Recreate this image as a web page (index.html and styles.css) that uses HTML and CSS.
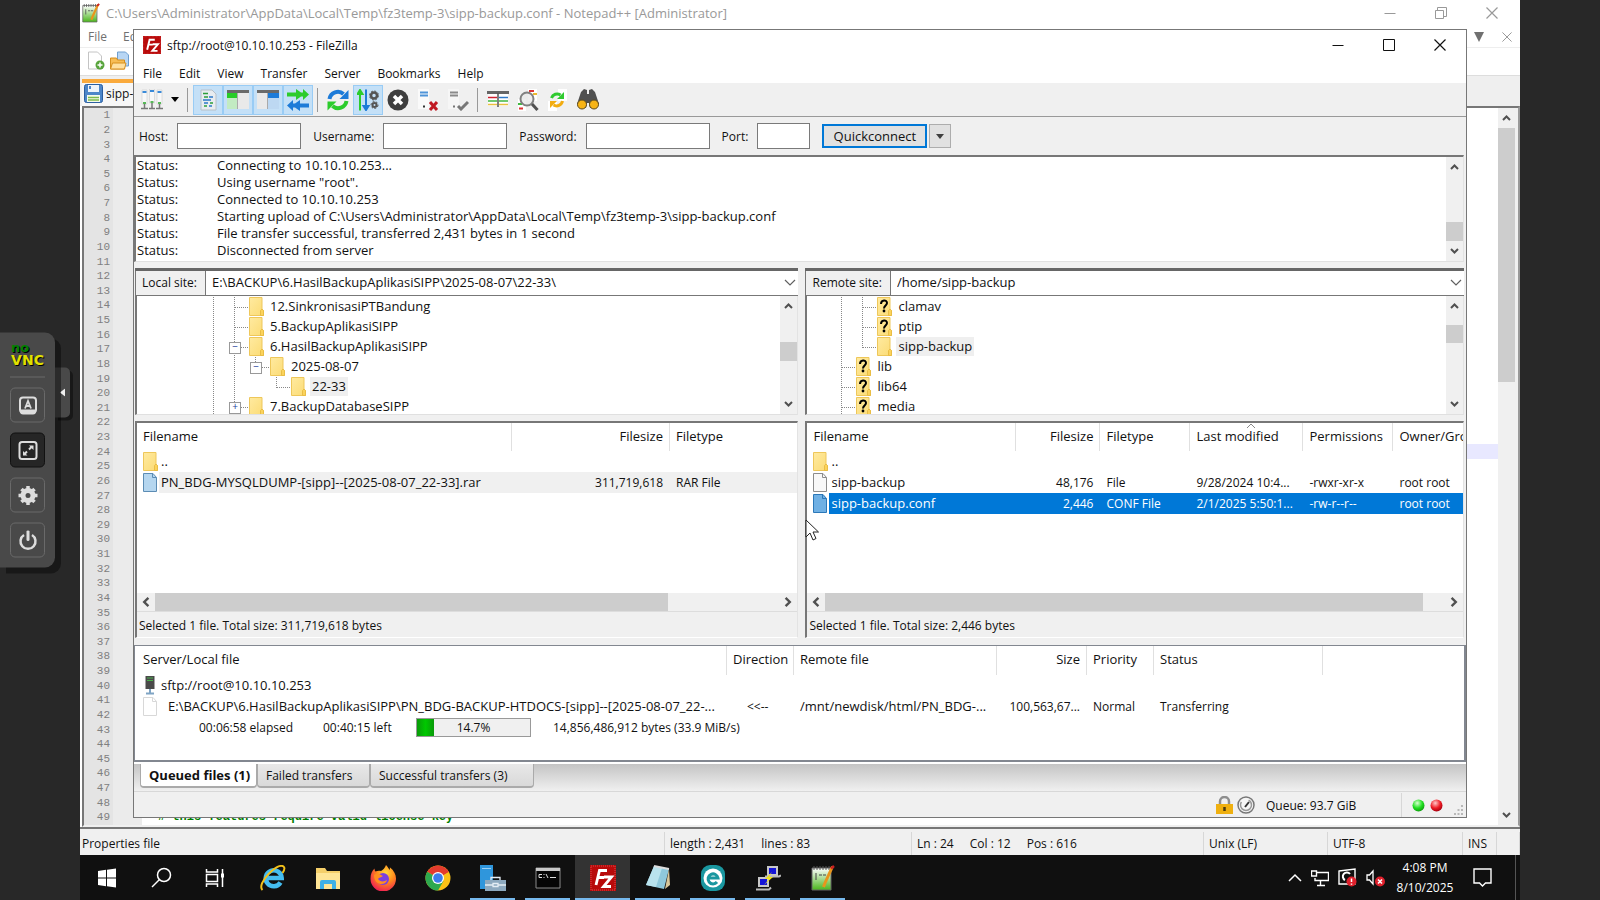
FILE: index.html
```html
<!DOCTYPE html>
<html lang="en">

<head>
	<meta charset="utf-8">
	<meta name="viewport" content="width=device-width, initial-scale=1.0">
	<title>noVNC</title>
	<link rel="stylesheet" href="styles.css">
</head>

<body>
	<!-- shared icons -->
	<svg class="defs" aria-hidden="true">
		<defs>
			<linearGradient id="g-folder" x1="0" y1="0" x2="1" y2="1">
				<stop offset="0" stop-color="#ffeaa0" />
				<stop offset="1" stop-color="#fbdb74" />
			</linearGradient>
			<linearGradient id="g-green" x1="0" y1="0" x2="0" y2="1">
				<stop offset="0" stop-color="#fff" />
				<stop offset="1" stop-color="#4ab51c" />
			</linearGradient>
			<radialGradient id="g-fox" cx="0.6" cy="0.3" r="0.7">
				<stop offset="0" stop-color="#ffd83a" />
				<stop offset="0.5" stop-color="#ff8a1c" />
				<stop offset="1" stop-color="#f0264f" />
			</radialGradient>
			<radialGradient id="g-led1" cx="0.4" cy="0.3" r="0.7">
				<stop offset="0" stop-color="#d8ffd0" />
				<stop offset="0.6" stop-color="#1fe01f" />
				<stop offset="1" stop-color="#0fa00f" />
			</radialGradient>
			<radialGradient id="g-led2" cx="0.4" cy="0.3" r="0.7">
				<stop offset="0" stop-color="#ffc8c8" />
				<stop offset="0.6" stop-color="#ee1c24" />
				<stop offset="1" stop-color="#a80010" />
			</radialGradient>
		</defs>
		<symbol id="i-folder" viewBox="0 0 15 19">
			<path d="M.5.5h12.500v12l1.500 1v5H.5z" fill="url(#g-folder)" stroke="#eec75a" />
			<path d="M11.500 18.500v-5l1.500-1.500 1.500 1.500v5z" fill="#fbd35c" stroke="#e9bd45" />
		</symbol>
		<symbol id="i-folder-q" viewBox="0 0 15 19">
			<use href="#i-folder" width="15" height="19" />
			<path d="M4 7c0-4.500 6-4.500 6-1 0 2.500-3 2.500-3 5.500" fill="none" stroke="#000" stroke-width="2" />
			<circle cx="7" cy="14" r="1.400" />
		</symbol>
		<symbol id="i-file" viewBox="0 0 14 19">
			<path d="M.5.5h9.500l3.500 4v14H.5z" fill="var(--paper, #f8f8f8)" stroke="var(--edge, #8c8c8c)" />
			<path d="M9.500.5v4h4" fill="none" stroke="var(--edge, #8c8c8c)" />
		</symbol>
		<symbol id="i-up" viewBox="0 0 10 8">
			<path d="M1.500 6L5 2.500 8.500 6" fill="none" stroke="#505050" stroke-width="2" />
		</symbol>
		<symbol id="i-down" viewBox="0 0 10 8">
			<path d="M1.500 2L5 5.500 8.500 2" fill="none" stroke="#505050" stroke-width="2" />
		</symbol>
		<symbol id="i-left" viewBox="0 0 8 10">
			<path d="M6 1.500L2.500 5 6 8.500" fill="none" stroke="#505050" stroke-width="2" />
		</symbol>
		<symbol id="i-right" viewBox="0 0 8 10">
			<path d="M2 1.500L5.500 5 2 8.500" fill="none" stroke="#505050" stroke-width="2" />
		</symbol>
		<symbol id="i-min" viewBox="0 0 12 12"><path d="M.5 6.500h11" stroke="currentColor" /></symbol>
		<symbol id="i-max" viewBox="0 0 12 12"><path d="M.5.5h11v11H.5z" fill="none" stroke="currentColor" /></symbol>
		<symbol id="i-restore" viewBox="0 0 12 12"><path d="M.5 3.500h8v8h-8zM2.500 3.500v-3h9v9h-3" fill="none" stroke="currentColor" /></symbol>
		<symbol id="i-close" viewBox="0 0 12 12"><path d="M.5.5l11 11M11.500.5l-11 11" fill="none" stroke="currentColor" stroke-width="1.200" /></symbol>
		<symbol id="i-fz" viewBox="0 0 26 26">
			<path d="M0 0h26v26H0z" fill="#b80a0a" />
			<path d="M1 1h24v24H1z" fill="none" stroke="#d84a4a" stroke-dasharray="1 1" />
			<path d="M6 20L9.500 5.500H17M8 12.500h6M14 12h7.500L13.500 21.500H21" fill="none" stroke="#fff" stroke-width="2.800" />
		</symbol>
		<symbol id="i-npp" viewBox="0 0 24 26">
			<path d="M1 3h19v22H1z" fill="url(#g-green)" stroke="#666" />
			<path d="M3 1v4M6 1v4M9 1v4M12 1v4M15 1v4M18 1v4" stroke="#555" />
			<path d="M5 8v7M8 10h3M12 10h3" stroke="#444" fill="none" />
			<path d="M21.500 1.500L14 18l-1.500 4" stroke="#e8951c" stroke-width="3" fill="none" />
			<path d="M20 3.500L23 1" stroke="#c22" stroke-width="2.500" />
		</symbol>
	</svg>

	<!-- remote desktop -->
	<main class="desktop">

		<section class="npp">
			<header class="npp-title">
				<svg class="npp-logo"><use href="#i-npp" /></svg>
				<span class="npp-caption">C:\Users\Administrator\AppData\Local\Temp\fz3temp-3\sipp-backup.conf - Notepad++ [Administrator]</span>
				<button aria-label="Minimize"><svg><use href="#i-min" /></svg></button>
				<button aria-label="Restore"><svg><use href="#i-restore" /></svg></button>
				<button aria-label="Close"><svg><use href="#i-close" /></svg></button>
			</header>
			<nav class="npp-menu">
				<button>File</button>
				<button>Edit</button>
				<span class="npp-menu-end">
					<svg width="10" height="10" viewBox="0 0 10 10"><path d="M0 0h10L5 10z" fill="#707070" /></svg>
					<svg width="10" height="10" viewBox="0 0 12 12" color="#9a9a9a"><use href="#i-close" /></svg>
				</span>
			</nav>
			<div class="npp-tools">
				<svg width="18" height="20" viewBox="0 0 18 20">
					<path d="M1.500 1h9l4 4v13h-13z" fill="#fff" stroke="#c4c4c4" />
					<circle cx="13" cy="14" r="4.500" fill="#58a43c" />
					<path d="M13 11.500v5M10.500 14h5" stroke="#fff" stroke-width="1.500" />
				</svg>
				<svg width="19" height="20" viewBox="0 0 19 20">
					<path d="M7.500 1h8l3 3v11h-11z" fill="#b8d6f4" stroke="#6f9fd0" />
					<path d="M.5 7h6l1 2h7v9H.5z" fill="#f7bd55" stroke="#d68f1e" />
					<path d="M.5 18l2-6h13.500l-1.500 6z" fill="#ffe0a0" stroke="#d68f1e" />
				</svg>
			</div>
			<div class="npp-tabs">
				<div class="npp-tab">
					<svg width="19" height="19" viewBox="0 0 19 19">
						<rect x=".5" y=".5" width="18" height="18" rx="2" fill="#4d86c8" stroke="#2c5fa0" />
						<path d="M4 1h11v7H4z" fill="#eef4fb" />
						<path d="M6 2v3" stroke="#4d86c8" stroke-width="2" />
						<path d="M3 11h13v7H3z" fill="#f4fbea" />
						<path d="M4 13.500h11M4 16h11" stroke="#7dbb4c" stroke-width="1.500" />
					</svg>
					<span>sipp-backup.conf</span>
				</div>
			</div>
			<div class="editor">
				<ol class="lines">
					<li>1</li><li>2</li><li>3</li><li>4</li><li>5</li><li>6</li><li>7</li>
					<li>8</li><li>9</li><li>10</li><li>11</li><li>12</li><li>13</li><li>14</li>
					<li>15</li><li>16</li><li>17</li><li>18</li><li>19</li><li>20</li><li>21</li>
					<li>22</li><li>23</li><li>24</li><li>25</li><li>26</li><li>27</li><li>28</li>
					<li>29</li><li>30</li><li>31</li><li>32</li><li>33</li><li>34</li><li>35</li>
					<li>36</li><li>37</li><li>38</li><li>39</li><li>40</li><li>41</li><li>42</li>
					<li>43</li><li>44</li><li>45</li><li>46</li><li>47</li><li>48</li><li>49</li>
				</ol>
				<div class="code">
					<div style="flex: 23"></div>
					<div class="current" style="flex: 1"></div>
					<div style="flex: 24"></div>
					<div class="comment" style="flex: 1"># this features require valid license key</div>
				</div>
				<div class="scroll">
					<svg class="arrow"><use href="#i-up" /></svg>
					<div class="thumb" style="flex: 254"></div>
					<div style="flex: 424"></div>
					<svg class="arrow"><use href="#i-down" /></svg>
				</div>
			</div>
			<footer class="npp-status">
				<span class="st-type">Properties file</span>
				<span class="st-length"><i>length : 2,431</i><i>lines : 83</i></span>
				<span class="st-pos"><i>Ln : 24</i><i>Col : 12</i><i>Pos : 616</i></span>
				<span class="st-eol">Unix (LF)</span>
				<span class="st-enc">UTF-8</span>
				<span class="st-ins">INS</span>
				<span class="st-end"></span>
			</footer>
		</section>

		<section class="fz">
			<header class="fz-title">
				<svg class="fz-logo"><use href="#i-fz" /></svg>
				<span class="fz-caption">sftp://root@10.10.10.253 - FileZilla</span>
				<button aria-label="Minimize"><svg><use href="#i-min" /></svg></button>
				<button aria-label="Maximize"><svg><use href="#i-max" /></svg></button>
				<button aria-label="Close"><svg><use href="#i-close" /></svg></button>
			</header>
			<nav class="fz-menu">
				<button>File</button>
				<button>Edit</button>
				<button>View</button>
				<button>Transfer</button>
				<button>Server</button>
				<button>Bookmarks</button>
				<button>Help</button>
			</nav>

			<div class="toolbar">
				<button aria-label="Site Manager">
					<svg viewBox="0 0 22 22">
						<path d="M1 1h5v14H1zM8.500 0h5v14h-5zM16 1h5v14h-5z" fill="#f8f8f8" stroke="#c4c4c4" stroke-width=".5" />
						<path d="M1.500 3h4M9 2h4M16.500 3h4" stroke="#3b8ad8" stroke-width="2" />
						<path d="M3.500 14v5M11 13v6M18.500 14v5M0 19.500h7M8 19.500h6M15 19.500h7" stroke="#777" stroke-width="1.500" />
						<path d="M2 14h3M9.500 13h3M17 14h3" stroke="#58b858" stroke-width="2" />
					</svg>
				</button>
				<button class="drop" aria-label="Site list">
					<svg viewBox="0 0 8 5"><path d="M0 0h8L4 5z" /></svg>
				</button>
				<span class="sep"></span>
				<button class="on" aria-label="Toggle message log">
					<svg viewBox="0 0 22 22">
						<path d="M4 1h11l4 4v16H4z" fill="#e8ecf0" stroke="#b8c0c8" />
						<path d="M6 4.500h5M7 8h4M13 14h3M7 17h3" stroke="#2c9f3a" stroke-width="1.500" />
						<path d="M12 8h4M6 11h8M7 14h4M12 17h3" stroke="#2d78c8" stroke-width="1.500" />
					</svg>
				</button>
				<button class="on" aria-label="Toggle local tree">
					<svg viewBox="0 0 22 22">
						<path d="M0 1h22v19H0z" fill="#e9e9e9" />
						<path d="M0 1h22v3H0z" fill="#6a6a6a" />
						<path d="M0 4h10v5H0z" fill="#27cc27" />
						<path d="M0 9h10v11H0z" fill="#c2ebc2" />
						<path d="M10.500 4v16" stroke="#aaa" />
					</svg>
				</button>
				<button class="on" aria-label="Toggle remote tree">
					<svg viewBox="0 0 22 22">
						<path d="M0 1h22v19H0z" fill="#e9e9e9" />
						<path d="M0 1h22v3H0z" fill="#6a6a6a" />
						<path d="M11 4h11v5H11z" fill="#1d7bd8" />
						<path d="M11 9h11v11H11z" fill="#bdd8f2" />
						<path d="M10.500 4v16" stroke="#aaa" />
					</svg>
				</button>
				<button class="on" aria-label="Toggle queue">
					<svg viewBox="0 0 22 22">
						<path d="M0 3.500h9V0l5 3.500h2V0l6 5.500-6 5.500V7.500h-2L9 11V7.500H0z" fill="#2ccc2c" />
						<path d="M22 14.500h-9V11l-5 3.500H6V11l-6 5.500L6 22v-3.500h2l5 3.500v-3.500h9z" fill="#1d7bd8" />
					</svg>
				</button>
				<span class="sep"></span>
				<button aria-label="Refresh">
					<svg viewBox="0 0 22 22">
						<path d="M2.500 10a8.500 8.500 0 0 1 14-5" fill="none" stroke="#1d7bd8" stroke-width="4" />
						<path d="M21.500 1v9h-9z" fill="#1d7bd8" />
						<path d="M19.500 12a8.500 8.500 0 0 1-14 5" fill="none" stroke="#2ccc2c" stroke-width="4" />
						<path d="M.5 21.500v-9h9z" fill="#2ccc2c" />
					</svg>
				</button>
				<button class="on" aria-label="Process queue">
					<svg viewBox="0 0 22 22">
						<path d="M3 21.500V4M.5 5L3 1l2.500 4z" stroke="#2ccc2c" stroke-width="2" fill="#2ccc2c" />
						<path d="M9 .5v17M6.500 17L9 21l2.500-4z" stroke="#1d7bd8" stroke-width="2" fill="#1d7bd8" />
						<circle cx="17" cy="6.500" r="3" fill="none" stroke="#555" stroke-width="2.500" />
						<circle cx="17" cy="6.500" r="4.500" fill="none" stroke="#555" stroke-dasharray="2 1.500" />
						<circle cx="17.500" cy="16" r="2" fill="none" stroke="#555" stroke-width="2" />
						<circle cx="17.500" cy="16" r="3.500" fill="none" stroke="#555" stroke-dasharray="2 1.500" />
					</svg>
				</button>
				<button aria-label="Cancel">
					<svg viewBox="0 0 22 22">
						<circle cx="11" cy="11" r="10.500" fill="#3e3e3e" />
						<path d="M7 7l8 8M15 7l-8 8" stroke="#fff" stroke-width="3.500" />
					</svg>
				</button>
				<button aria-label="Disconnect">
					<svg viewBox="0 0 22 22">
						<path d="M1 0h11v20H1z" fill="#fafafa" />
						<path d="M3 3.500h8M3 6.500h8" stroke="#4f94d8" stroke-width="2" />
						<path d="M6 17.500h2" stroke="#333" stroke-width="2" />
						<path d="M13 13l7 8M20 13l-7 8" stroke="#c01822" stroke-width="3" />
					</svg>
				</button>
				<button aria-label="Reconnect">
					<svg viewBox="0 0 22 22">
						<path d="M1 0h11v20H1z" fill="#f6f6f6" />
						<path d="M3 3.500h8M3 6.500h8" stroke="#8a8a8a" stroke-width="2" />
						<path d="M6 17.500h2" stroke="#777" stroke-width="2" />
						<path d="M11 17l3 3 7-7" stroke="#777" stroke-width="3" fill="none" />
					</svg>
				</button>
				<span class="sep"></span>
				<button aria-label="Filter">
					<svg viewBox="0 0 22 22">
						<path d="M1 3h20v14H1z" fill="#fff" />
						<path d="M0 3.500h22" stroke="#666" stroke-width="3" />
						<path d="M1 8.500h9" stroke="#d02030" stroke-width="1.500" />
						<path d="M12 8.500h9" stroke="#2d78c8" stroke-width="1.500" />
						<path d="M1 12h9M12 12h9" stroke="#40b840" stroke-width="1.500" />
						<path d="M1 15.500h9M12 15.500h9" stroke="#e8c040" stroke-width="1.500" />
						<path d="M11 4v14" stroke="#555" stroke-width="1.500" />
					</svg>
				</button>
				<button aria-label="Directory comparison">
					<svg viewBox="0 0 22 22">
						<path d="M11 0h9v12h-9zM1 10h8v12H1z" fill="#fff" />
						<path d="M12 2h5M2 19.500h4" stroke="#d33" stroke-width="2" />
						<path d="M16 5h4" stroke="#eab830" stroke-width="2" />
						<path d="M1 15h4" stroke="#40b840" stroke-width="2" />
						<circle cx="10" cy="10" r="6.500" fill="#e8e8e8" fill-opacity=".8" stroke="#808080" stroke-width="2" />
						<path d="M15 15l5.500 6" stroke="#505050" stroke-width="3" />
					</svg>
				</button>
				<button aria-label="Synchronized browsing">
					<svg viewBox="0 0 22 22">
						<path d="M11 0h9v12h-9zM1 12h9v10H1z" fill="#fff" />
						<path d="M4.500 9a6 6 0 0 1 9-3" fill="none" stroke="#2fca2f" stroke-width="3" />
						<path d="M17 3v7h-7z" fill="#2fca2f" />
						<path d="M15.500 12a6 6 0 0 1-9 4" fill="none" stroke="#f2ac10" stroke-width="3" />
						<path d="M3 19v-7h7z" fill="#f2ac10" />
					</svg>
				</button>
				<button aria-label="Search">
					<svg viewBox="0 0 22 22">
						<path d="M4 3l3-3 3 1v4h2V1l3-1 3 3 4 12-4 4h-5l-1-5h-2l-1 5H4l-4-4z" fill="#505050" />
						<circle cx="5" cy="15.500" r="4.500" fill="#f7b416" stroke="#5a4a20" />
						<circle cx="17" cy="15.500" r="4.500" fill="#f7b416" stroke="#5a4a20" />
					</svg>
				</button>
			</div>

			<form class="quick">
				<label for="host">Host:</label>
				<input id="host" type="text">
				<label for="user">Username:</label>
				<input id="user" type="text">
				<label for="pass">Password:</label>
				<input id="pass" type="password">
				<label for="port">Port:</label>
				<input id="port" type="text" class="port">
				<button type="button" class="connect">Quickconnect</button>
				<button type="button" class="history" aria-label="History">
					<svg viewBox="0 0 8 5"><path d="M0 0h8L4 5z" fill="#404040" /></svg>
				</button>
			</form>

			<div class="log">
				<dl>
					<dt>Status:</dt><dd>Connecting to 10.10.10.253...</dd>
					<dt>Status:</dt><dd>Using username "root".</dd>
					<dt>Status:</dt><dd>Connected to 10.10.10.253</dd>
					<dt>Status:</dt><dd>Starting upload of C:\Users\Administrator\AppData\Local\Temp\fz3temp-3\sipp-backup.conf</dd>
					<dt>Status:</dt><dd>File transfer successful, transferred 2,431 bytes in 1 second</dd>
					<dt>Status:</dt><dd>Disconnected from server</dd>
				</dl>
				<div class="scroll">
					<svg class="arrow"><use href="#i-up" /></svg>
					<div style="flex: 46"></div>
					<div class="thumb" style="flex: 19"></div>
					<svg class="arrow"><use href="#i-down" /></svg>
				</div>
			</div>

			<div class="panes">
				<div class="pane">
					<div class="site">
						<label for="local">Local site:</label>
						<input id="local" type="text" value="E:\BACKUP\6.HasilBackupAplikasiSIPP\2025-08-07\22-33\">
						<svg class="chevron" viewBox="0 0 12 8"><path d="M1 1l5 5 5-5" fill="none" stroke="#606060" stroke-width="1.200" /></svg>
					</div>
					<div class="tree">
						<ul class="nodes local-nodes">
							<li class="d1"><svg class="fold"><use href="#i-folder" /></svg><span>12.SinkronisasiPTBandung</span></li>
							<li class="d1"><svg class="fold"><use href="#i-folder" /></svg><span>5.BackupAplikasiSIPP</span></li>
							<li class="d1 box open"><svg class="fold"><use href="#i-folder" /></svg><span>6.HasilBackupAplikasiSIPP</span></li>
							<li class="d2 box open"><svg class="fold"><use href="#i-folder" /></svg><span>2025-08-07</span></li>
							<li class="d3"><svg class="fold"><use href="#i-folder" /></svg><span class="current">22-33</span></li>
							<li class="d1 box"><svg class="fold"><use href="#i-folder" /></svg><span>7.BackupDatabaseSIPP</span></li>
						</ul>
						<div class="scroll">
							<svg class="arrow"><use href="#i-up" /></svg>
							<div style="flex: 27"></div>
							<div class="thumb" style="flex: 19"></div>
							<div style="flex: 34"></div>
							<svg class="arrow"><use href="#i-down" /></svg>
						</div>
					</div>
					<div class="list">
						<table>
							<colgroup><col class="l-name"><col class="l-size"><col></colgroup>
							<thead>
								<tr><th>Filename</th><th class="num">Filesize</th><th class="end">Filetype</th></tr>
							</thead>
							<tbody>
								<tr><td><div class="name"><svg class="fold"><use href="#i-folder" /></svg><span>..</span></div></td><td></td><td></td></tr>
								<tr class="marked"><td><div class="name"><svg class="file blue"><use href="#i-file" /></svg><span>PN_BDG-MYSQLDUMP-[sipp]--[2025-08-07_22-33].rar</span></div></td><td class="num">311,719,618</td><td>RAR File</td></tr>
							</tbody>
						</table>
						<div class="hscroll">
							<svg class="arrow"><use href="#i-left" /></svg>
							<div class="thumb" style="flex: 513"></div>
							<div style="flex: 111"></div>
							<svg class="arrow"><use href="#i-right" /></svg>
						</div>
						<p class="summary">Selected 1 file. Total size: 311,719,618 bytes</p>
					</div>
				</div>

				<div class="pane">
					<div class="site">
						<label for="remote">Remote site:</label>
						<input id="remote" type="text" value="/home/sipp-backup">
						<svg class="chevron" viewBox="0 0 12 8"><path d="M1 1l5 5 5-5" fill="none" stroke="#606060" stroke-width="1.200" /></svg>
					</div>
					<div class="tree">
						<ul class="nodes remote-nodes">
							<li class="d2"><svg class="fold"><use href="#i-folder-q" /></svg><span>clamav</span></li>
							<li class="d2"><svg class="fold"><use href="#i-folder-q" /></svg><span>ptip</span></li>
							<li class="d2"><svg class="fold"><use href="#i-folder" /></svg><span class="current">sipp-backup</span></li>
							<li class="d1"><svg class="fold"><use href="#i-folder-q" /></svg><span>lib</span></li>
							<li class="d1"><svg class="fold"><use href="#i-folder-q" /></svg><span>lib64</span></li>
							<li class="d1"><svg class="fold"><use href="#i-folder-q" /></svg><span>media</span></li>
						</ul>
						<div class="scroll">
							<svg class="arrow"><use href="#i-up" /></svg>
							<div style="flex: 9"></div>
							<div class="thumb" style="flex: 19"></div>
							<div style="flex: 52"></div>
							<svg class="arrow"><use href="#i-down" /></svg>
						</div>
					</div>
					<div class="list">
						<table>
							<colgroup><col class="r-name"><col class="r-size"><col class="r-type"><col class="r-date"><col class="r-perm"><col></colgroup>
							<thead>
								<tr>
									<th>Filename</th><th class="num">Filesize</th><th>Filetype</th>
									<th class="sorted">Last modified<svg viewBox="0 0 10 6"><path d="M1 5l4-4 4 4" fill="none" stroke="#888" /></svg></th>
									<th>Permissions</th><th class="end">Owner/Group</th>
								</tr>
							</thead>
							<tbody>
								<tr><td><div class="name"><svg class="fold"><use href="#i-folder" /></svg><span>..</span></div></td><td></td><td></td><td></td><td></td><td></td></tr>
								<tr><td><div class="name"><svg class="file"><use href="#i-file" /></svg><span>sipp-backup</span></div></td><td class="num">48,176</td><td>File</td><td>9/28/2024 10:4...</td><td>-rwxr-xr-x</td><td>root root</td></tr>
								<tr class="selected"><td><div class="name"><svg class="file picked"><use href="#i-file" /></svg><span>sipp-backup.conf</span></div></td><td class="num">2,446</td><td>CONF File</td><td>2/1/2025 5:50:1...</td><td>-rw-r--r--</td><td>root root</td></tr>
							</tbody>
						</table>
						<div class="hscroll">
							<svg class="arrow"><use href="#i-left" /></svg>
							<div class="thumb" style="flex: 596"></div>
							<div style="flex: 22"></div>
							<svg class="arrow"><use href="#i-right" /></svg>
						</div>
						<p class="summary">Selected 1 file. Total size: 2,446 bytes</p>
					</div>
				</div>
			</div>

			<div class="queue">
				<table>
					<colgroup><col class="q-file"><col class="q-dir"><col class="q-remote"><col class="q-size"><col class="q-prio"><col class="q-status"><col></colgroup>
					<thead>
						<tr><th>Server/Local file</th><th>Direction</th><th>Remote file</th><th class="num">Size</th><th>Priority</th><th>Status</th><th class="end"></th></tr>
					</thead>
					<tbody>
						<tr>
							<td colspan="7"><div class="name">
								<svg class="fold" viewBox="0 0 15 19"><path d="M2.500 0h9v13h-9z" fill="#4a4a4a" /><path d="M4 2h6M4 4.500h6" stroke="#49b04b" /><path d="M7 13v4M3 17.500h8" stroke="#7fa4c4" stroke-width="2" /></svg>
								<span>sftp://root@10.10.10.253</span>
							</div></td>
						</tr>
						<tr>
							<td><div class="name child"><svg class="file pale"><use href="#i-file" /></svg><span>E:\BACKUP\6.HasilBackupAplikasiSIPP\PN_BDG-BACKUP-HTDOCS-[sipp]--[2025-08-07_22-...</span></div></td>
							<td class="dir">&lt;&lt;--</td>
							<td class="path">/mnt/newdisk/html/PN_BDG-...</td>
							<td class="num">100,563,67...</td>
							<td>Normal</td>
							<td>Transferring</td>
							<td></td>
						</tr>
						<tr>
							<td colspan="7"><div class="progress">
								<span class="elapsed">00:06:58 elapsed</span>
								<span class="left">00:40:15 left</span>
								<span class="bar"><i style="width: 14.7%"></i><b>14.7%</b></span>
								<span>14,856,486,912 bytes (33.9 MiB/s)</span>
							</div></td>
						</tr>
					</tbody>
				</table>
			</div>

			<div class="tabs">
				<button class="active">Queued files (1)</button>
				<button>Failed transfers</button>
				<button>Successful transfers (3)</button>
			</div>

			<footer class="fz-status">
				<svg class="lock" width="17" height="18" viewBox="0 0 17 18">
					<path d="M4 9V5.500a4.500 4.500 0 0 1 9 0V9" fill="none" stroke="#8e8e8e" stroke-width="2.500" />
					<path d="M0 8h17v10H0z" fill="#efb010" />
					<path d="M8.500 11v4" stroke="#4a3a10" stroke-width="2.500" />
				</svg>
				<svg width="18" height="18" viewBox="0 0 18 18">
					<circle cx="9" cy="9" r="8" fill="#f6f6f6" stroke="#777" stroke-width="1.500" />
					<circle cx="9" cy="9" r="5.500" fill="none" stroke="#999" stroke-dasharray="20 8" stroke-width="1.500" />
					<path d="M8 11l4-5" stroke="#333" stroke-width="2" />
				</svg>
				<span class="fz-total">Queue: 93.7 GiB</span>
				<span class="leds">
					<svg width="13" height="13" viewBox="0 0 13 13"><circle cx="6.500" cy="6.500" r="6" fill="url(#g-led1)" /></svg>
					<svg width="13" height="13" viewBox="0 0 13 13"><circle cx="6.500" cy="6.500" r="6" fill="url(#g-led2)" /></svg>
				</span>
				<svg class="grip" width="10" height="10" viewBox="0 0 10 10"><path d="M7 0h2v2H7zM3.500 4h2v2h-2zM7 4h2v2H7zM0 8h2v2H0zM3.500 8h2v2h-2zM7 8h2v2H7z" fill="#b8b8b8" /></svg>
			</footer>
		</section>

		<svg class="cursor" viewBox="0 0 14 22"><path d="M1 1v17l4-4 3 7 3-1.500-3-6.500h5.500z" fill="#fff" stroke="#222" /></svg>

		<footer class="taskbar">
			<button aria-label="Start">
				<svg viewBox="0 0 26 26"><path d="M3 6l8-1.200V12.500H3zM12 4.700L21 3.500v9h-9zM3 13.500h8v7.700L3 20zM12 13.500h9v9l-9-1.200z" fill="#fff" /></svg>
			</button>
			<button aria-label="Search">
				<svg viewBox="0 0 26 26"><circle cx="14" cy="10" r="6.500" fill="none" stroke="#fff" stroke-width="1.500" /><path d="M9.500 14.500L2 22" stroke="#fff" stroke-width="1.500" /></svg>
			</button>
			<button aria-label="Task View">
				<svg viewBox="0 0 26 26"><path d="M1.500 4v3h11V4M1.500 22v-3h11v3M1.500 9.500h11v7h-11zM17.500 4v18" fill="none" stroke="#fff" stroke-width="1.500" /><path d="M16 8.500h3v4h-3z" fill="#fff" /></svg>
			</button>
			<button aria-label="Internet Explorer">
				<svg viewBox="0 0 26 26"><path d="M20.500 17.500a8 8 0 1 1 1.200-4.500H7" fill="none" stroke="#45bdf0" stroke-width="4.500" /><path d="M2.500 25C-4 19 17-3 23.500 1.500c2 1.500 0 5-1 6.500" fill="none" stroke="#f3c11b" stroke-width="2" /></svg>
			</button>
			<button aria-label="File Explorer">
				<svg viewBox="0 0 26 26"><path d="M1 3h9l2 3h13v18H1z" fill="#f5cf6a" /><path d="M1 8h24v16H1z" fill="#ffe596" /><path d="M5 24v-7q0-2 2-2h12q2 0 2 2v7h-4v-5h-8v5z" fill="#3fb0e6" /></svg>
			</button>
			<button aria-label="Firefox">
				<svg viewBox="0 0 26 26"><path d="M16 0c2 2 3 4 3.500 5 .5-1 .5-2 .3-2.800C24 5.500 26 9.500 26 13.500A12.700 12.700 0 0 1 .5 14C.5 9 2 6 4.500 3.500c0 1.500.5 2.500 1 3 2-1 4-1 5.500-.5C13 5 15 3 16 0z" fill="url(#g-fox)" /><circle cx="13" cy="14" r="6" fill="#7a3fe0" /><path d="M4 10c4-3 7 0 9 1-2 2-4 1-5 3 2 3 6 3 9 1-1 6-13 6-13-5z" fill="#ff8f1f" /></svg>
			</button>
			<button aria-label="Chrome">
				<svg viewBox="0 0 26 26"><circle cx="13" cy="13" r="12.500" fill="#fbc116" /><path d="M13 13L2.200 6.700A12.500 12.500 0 0 1 23.800 6.700z" fill="#e33b2e" /><path d="M13 13L2.200 6.700A12.500 12.500 0 0 0 13 25.500l5.500-9.500z" fill="#2da94f" /><path d="M13 6.700h10.800L13 13z" fill="#e33b2e" /><circle cx="13" cy="13" r="6" fill="#fff" /><circle cx="13" cy="13" r="4.800" fill="#3b7ded" /></svg>
			</button>
			<button class="running" aria-label="Server Manager">
				<svg viewBox="0 0 26 26"><path d="M0 0h13v24H0z" fill="#2f96dc" /><path d="M2 3.500h9" stroke="#9bd0f5" /><path d="M5 15h21v11H5z" fill="#8da9bf" /><path d="M11 15v-2.500h9V15M5 20h8M18 20h8M13 18.500h5v3h-5z" fill="none" stroke="#e4edf4" stroke-width="1.300" /></svg>
			</button>
			<button class="running" aria-label="Command Prompt">
				<svg viewBox="0 0 26 26"><path d="M1 3h24v20H1z" fill="#050505" stroke="#8b8b8b" /><path d="M1 3h24v3H1z" fill="#c8c8c8" /><path d="M7 9.500H4v3h3M9 9v1M9 12v1M11 9l2 4M15 12.500h6" fill="none" stroke="#ddd" /></svg>
			</button>
			<button class="running front" aria-label="FileZilla">
				<svg viewBox="0 0 26 26"><use href="#i-fz" width="26" height="26" /></svg>
			</button>
			<button class="running" aria-label="Notepad">
				<svg viewBox="0 0 26 26"><path d="M9 1l15 3-5 20L1 20z" fill="#8fc9dc" /><path d="M9 1l8 2-6 19L1 20z" fill="#b9e3ee" /><path d="M24 4l1 16-5 4z" fill="#d8c79a" /><path d="M9 1l15 3" stroke="#ddd" stroke-width="2" /></svg>
			</button>
			<button class="running" aria-label="ESET">
				<svg viewBox="0 0 26 26"><rect x="1" y="0" width="24" height="26" rx="9" fill="#1a97a0" /><circle cx="13" cy="13" r="9.500" fill="#fff" /><path d="M17 17a5 5 0 1 1 1-4H8.500" fill="none" stroke="#1a97a0" stroke-width="3" /></svg>
			</button>
			<button class="running" aria-label="PuTTY">
				<svg viewBox="0 0 26 26"><path d="M12 1h11v10H12zM3 12h11v10H3z" fill="#c8c8c8" /><path d="M14 3h7v6h-7zM5 14h7v6H5z" fill="#1414d8" /><path d="M10 11.500h14l2-1M1 24.500h13l2-2" stroke="#bbb" stroke-width="2" fill="none" /><path d="M17 7l-7 7h4l-5 6 9-8h-4z" fill="#f2e21a" /></svg>
			</button>
			<button class="running" aria-label="Notepad++">
				<svg viewBox="0 0 24 26"><use href="#i-npp" width="24" height="26" /></svg>
			</button>
			<div class="tray">
				<svg width="14" height="9" viewBox="0 0 14 9"><path d="M1 8l6-6 6 6" fill="none" stroke="#fff" stroke-width="1.500" /></svg>
				<svg width="18" height="18" viewBox="0 0 18 18"><path d="M6 3.500h11.500v8H4V9M9.500 12v4M6 16.500h8M.5 2v5h5V2z" fill="none" stroke="#fff" stroke-width="1.400" /></svg>
				<svg width="19" height="19" viewBox="0 0 19 19"><path d="M1 3l16-2v15H1z" fill="none" stroke="#fff" stroke-width="1.400" /><path d="M12 6a4 4 0 1 0-5 6" fill="none" stroke="#fff" stroke-width="2" /><circle cx="13.500" cy="13.500" r="5" fill="#e0202c" /><path d="M13.500 10.500v3.500M13.500 15.500v1.200" stroke="#fff" stroke-width="1.500" /></svg>
				<svg width="19" height="18" viewBox="0 0 19 18"><path d="M1 6h2.500L7 2v13l-3.500-4H1z" fill="none" stroke="#fff" stroke-width="1.300" /><circle cx="14" cy="12.500" r="5" fill="#e0202c" /><path d="M12 10.500l4 4M16 10.500l-4 4" stroke="#fff" stroke-width="1.500" /></svg>
				<div class="clock"><span>4:08 PM</span><span>8/10/2025</span></div>
				<svg width="19" height="20" viewBox="0 0 19 20"><path d="M1 1h17v14h-5.500L9.500 18l-3-3H1z" fill="none" stroke="#fff" stroke-width="1.400" /></svg>
			</div>
			<span class="peek"></span>
		</footer>
	</main>

	<!-- noVNC control bar -->
	<aside class="novnc">
		<div class="novnc-panel">
			<h1><span>no</span>VNC</h1>
			<hr>
			<button aria-label="Extra keys">
				<svg viewBox="0 0 20 20"><rect x="2" y="2" width="16" height="15" rx="3" fill="none" stroke="#ddd" stroke-width="2" /><path d="M2 14h16v2q0 3-3 3H5q-3 0-3-3z" fill="#ddd" /><path d="M7 13l3-7.500L13 13M8 10.500h4" fill="none" stroke="#ddd" stroke-width="1.800" /></svg>
			</button>
			<button class="pressed" aria-label="Full screen">
				<svg viewBox="0 0 20 20"><rect x="1.500" y="1.500" width="17" height="17" rx="2.500" fill="none" stroke="#ddd" stroke-width="2" /><path d="M11 5h4.500v4.500zM5 10.500V15h4.500z" fill="#ddd" /><path d="M14 6l-3 3M6 14l3-3" stroke="#ddd" stroke-width="2" /></svg>
			</button>
			<button aria-label="Settings">
				<svg viewBox="0 0 20 20"><circle cx="10" cy="10" r="5" fill="none" stroke="#ddd" stroke-width="5" /><path d="M10 .5v4M10 15.500v4M.5 10h4M15.500 10h4M3.500 3.500l2.500 2.500M14 14l2.500 2.500M16.500 3.500L14 6M6 14l-2.500 2.500" stroke="#ddd" stroke-width="3.500" /></svg>
			</button>
			<button aria-label="Disconnect">
				<svg viewBox="0 0 20 20"><path d="M6 4.500a7.500 7.500 0 1 0 8 0" fill="none" stroke="#ddd" stroke-width="2.500" /><path d="M10 1v8" stroke="#ddd" stroke-width="3" stroke-linecap="round" /></svg>
			</button>
		</div>
		<button class="handle" aria-label="Hide control bar"><svg viewBox="0 0 5 8"><path d="M5 0v8L0 4z" fill="#eee" /></svg></button>
	</aside>

</body>

</html>
```
FILE: styles.css
```css
* {
	box-sizing: border-box;
	margin: 0;
	padding: 0;
}

body {
	display: flex;
	height: 100vh;
	padding: 0 80px;
	background: #282828;
	font-family: "Open Sans", "Noto Sans", sans-serif;
	font-size: 12px;
	line-height: 17px;
	color: #111;
	white-space: nowrap;
	overflow: hidden;
}

button,
input {
	font: inherit;
	color: inherit;
	background: none;
	border: 0;
}

ul,
ol {
	list-style: none;
}

i {
	font-style: normal;
}

svg {
	display: block;
	flex: none;
}

.defs {
	position: absolute;
	width: 0;
	height: 0;
}

.desktop {
	position: relative;
	flex: 1;
	display: flex;
	flex-direction: column;
	min-width: 0;
}

/* scrollbars */
.scroll,
.hscroll {
	display: flex;
	flex: none;
	background: #f0f0f0;
}

.scroll {
	flex-direction: column;
	width: 17px;
}

.hscroll {
	height: 18px;
}

.scroll .arrow {
	width: 17px;
	height: 20px;
	padding: 6px 3px;
}

.hscroll .arrow {
	width: 18px;
	height: 18px;
	padding: 3px 4px;
}

.thumb {
	background: #cdcdcd;
}

/* Notepad++ */
.npp {
	flex: 1;
	display: flex;
	flex-direction: column;
	min-height: 0;
	background: #fff;
}

.npp-title {
	display: flex;
	align-items: center;
	height: 26px;
	padding: 0 3px 0 2px;
	font-size: 13px;
	color: #999;
}

.npp-logo {
	width: 18px;
	height: 20px;
	margin-right: 6px;
}

.npp-caption,
.fz-caption {
	flex: 1;
}

.npp-title button,
.fz-title button {
	display: flex;
	justify-content: center;
	width: 51px;
}

.npp-title button svg,
.fz-title button svg {
	width: 12px;
	height: 12px;
}

.npp-menu {
	display: flex;
	align-items: center;
	gap: 16px;
	height: 22px;
	padding: 0 8px;
	border-bottom: 1px solid #eee;
	color: #707070;
}

.npp-menu-end {
	display: flex;
	gap: 18px;
	margin-left: auto;
}

.npp-tools {
	display: flex;
	gap: 5px;
	height: 28px;
	padding: 3px 7px;
	border-bottom: 1px solid #ddd;
}

.npp-tabs {
	height: 30px;
	padding: 3px 2px 0;
	background: #efefef;
}

.npp-tab {
	display: flex;
	align-items: center;
	gap: 3px;
	width: 160px;
	height: 27px;
	padding: 0 2px 2px;
	border-top: 4px solid #faaa3c;
	background: #f7f7f7;
}

.editor {
	flex: 1;
	display: flex;
	min-height: 0;
	margin-left: 2px;
	padding-right: 3px;
	border: 2px solid #777;
	border-right-color: #999;
	border-bottom-color: #f0f0f0;
	background: linear-gradient(#f0f0f0, #f0f0f0) right / 3px 100% no-repeat;
}

.lines {
	display: flex;
	flex-direction: column;
	width: 58px;
	padding-right: 32px;
	background: linear-gradient(90deg, #e4e4e4 50%, #ebebeb 50%);
	font: 11px "Liberation Mono", monospace;
	color: #808080;
}

.lines li {
	flex: 1;
	display: flex;
	align-items: center;
	justify-content: flex-end;
	min-height: 0;
}

.code {
	flex: 1;
	display: flex;
	flex-direction: column;
	min-height: 0;
}

.code .current {
	background: #e8e8ff;
}

.comment {
	padding-left: 16px;
	font: bold 12px "Liberation Mono", monospace;
	line-height: 15px;
	color: #008000;
}

.npp-status {
	display: flex;
	height: 28px;
	padding-top: 3px;
	border-top: 2px solid #777;
	background: #f0f0f0;
	line-height: 23px;
}

.npp-status span {
	display: flex;
	gap: 16px;
	padding-left: 5px;
	border-right: 1px solid #d7d7d7;
}

.npp-status .st-type {
	width: 585px;
	padding-left: 2px;
}

.st-length {
	width: 247px;
}

.st-pos {
	width: 292px;
}

.st-eol {
	flex: 1;
}

.st-enc {
	width: 135px;
}

.st-ins {
	width: 34px;
}

.st-end {
	width: 23px;
}

/* FileZilla */
.fz {
	position: absolute;
	inset: 29px 53px 82px;
	display: flex;
	flex-direction: column;
	border: 1px solid #777;
	background: #f0f0f0;
}

.fz-title {
	display: flex;
	align-items: center;
	height: 32px;
	padding: 0 1px 2px 9px;
	background: #fff;
}

.fz-logo {
	width: 18px;
	height: 18px;
	margin-right: 6px;
}

.fz-menu {
	display: flex;
	align-items: center;
	gap: 17px;
	height: 21px;
	padding: 2px 0 0 9px;
	background: #fff;
}

.toolbar {
	display: flex;
	align-items: center;
	height: 34px;
	padding-left: 3px;
	border-bottom: 1px solid #999;
}

.toolbar button {
	display: flex;
	align-items: center;
	justify-content: center;
	width: 30px;
	height: 30px;
}

.toolbar button svg {
	width: 22px;
	height: 22px;
}

.toolbar .drop {
	width: 16px;
}

.toolbar .drop svg,
.history svg {
	width: 8px;
	height: 5px;
}

.toolbar .on {
	background: #c4e0f7;
	border: 1px solid #99ccf5;
}

.sep {
	width: 1px;
	height: 24px;
	margin: 0 5px 0 4px;
	background: #999;
}

.quick {
	display: flex;
	align-items: center;
	height: 38px;
	padding-left: 5px;
}

.quick input {
	width: 124px;
	height: 26px;
	margin: 0 12px 0 9px;
	padding: 0 4px;
	border: 1px solid #7a7a7a;
	background: #fff;
}

.quick .port {
	width: 53px;
}

.quick button {
	height: 24px;
	background: #e1e1e1;
}

.quick .connect {
	width: 105px;
	border: 2px solid #0078d7;
	font-size: 13px;
}

.quick .history {
	display: flex;
	align-items: center;
	justify-content: center;
	width: 22px;
	margin-left: 2px;
	border: 1px solid #adadad;
}

.log {
	display: flex;
	height: 107px;
	margin-right: 2px;
	border: 2px solid #777;
	border-right: 1px solid #e3e3e3;
	border-bottom: 1px solid #e0e0e0;
	background: #fff;
}

.log dl {
	flex: 1;
	display: grid;
	grid-template-columns: 80px 1fr;
	grid-auto-rows: 17px;
	padding-left: 1px;
	font-size: 13px;
}

.panes {
	flex: 1;
	display: grid;
	grid-template-columns: 664fr 659fr;
	gap: 7px;
	min-height: 0;
	margin-top: 6px;
	padding: 0 2px 0 1px;
}

.pane {
	display: flex;
	flex-direction: column;
	min-width: 0;
	min-height: 0;
}

.site {
	display: flex;
	align-items: center;
	height: 28px;
	border-top: 3px solid #666;
	border-bottom: 1px solid #777;
	background: #fff;
}

.site label {
	align-self: stretch;
	padding: 0 8px 0 6px;
	border: 1px solid #777;
	border-width: 0 1px;
	background: #f0f0f0;
	line-height: 23px;
}

.site input {
	flex: 1;
	padding: 0 0 1px 6px;
	font-size: 13px;
}

.chevron {
	width: 12px;
	height: 8px;
	margin-right: 2px;
}

.tree {
	display: flex;
	height: 119px;
	border-left: 2px solid #777;
	border-right: 1px solid #e3e3e3;
	border-bottom: 1px solid #e0e0e0;
	background: #fff;
	overflow: hidden;
}

.nodes {
	flex: 1;
	overflow: hidden;
	font-size: 13px;
}

.nodes li {
	position: relative;
	display: flex;
	align-items: center;
	height: 20px;
}

.fold {
	width: 15px;
	height: 19px;
}

.file {
	width: 14px;
	height: 19px;
	margin-right: 1px;
}

.blue {
	--paper: #b5d6ef;
	--edge: #5c8cb4;
}

.picked {
	--paper: #6fb0e4;
	--edge: #2c78b8;
}

.pale {
	--paper: #fff;
	--edge: #d8d8d8;
}

.nodes span {
	margin-left: 4px;
	padding: 1px 2px;
}

.nodes .current {
	background: #efefef;
}

/* dotted branches: one line per level */
.nodes li::before {
	content: "";
	width: 14px;
	margin: 2px 1px 0 0;
	border-top: 1px dotted #888;
}

.nodes li.box::after {
	content: "+";
	position: absolute;
	left: var(--box);
	top: 6px;
	width: 10px;
	height: 10px;
	border: 1px solid #999;
	background: #fff;
	font-size: 10px;
	line-height: 7px;
	text-align: center;
	color: #23439c;
}

.nodes li.open::after {
	content: "−";
}

.local-nodes {
	background:
		repeating-linear-gradient(#fff 0 1px, transparent 1px 2px),
		linear-gradient(#888, #888) 76px 0 / 1px 100% no-repeat,
		linear-gradient(#888, #888) 97px 0 / 1px 100% no-repeat,
		linear-gradient(#888, #888) 118px 60px / 1px 8px no-repeat,
		linear-gradient(#888, #888) 139px 80px / 1px 11px no-repeat;
}

.remote-nodes {
	background:
		repeating-linear-gradient(#fff 0 1px, transparent 1px 2px),
		linear-gradient(#888, #888) 34px 0 / 1px 100% no-repeat,
		linear-gradient(#888, #888) 55px 0 / 1px 51px no-repeat;
}

.local-nodes .d1 {
	--box: 92px;
	padding-left: 97px;
}

.local-nodes .d2 {
	--box: 113px;
	padding-left: 118px;
}

.local-nodes .d3 {
	padding-left: 139px;
}

.remote-nodes .d1 {
	padding-left: 34px;
}

.remote-nodes .d2 {
	padding-left: 55px;
}

.list {
	flex: 1;
	display: flex;
	flex-direction: column;
	min-height: 0;
	margin-top: 6px;
	border: 2px solid #777;
	border-right: 1px solid #e3e3e3;
	border-bottom: 1px solid #fff;
	background: #fff;
}

table {
	width: 100%;
	table-layout: fixed;
	border-spacing: 0;
}

th,
td {
	height: 21px;
	padding: 0 6px;
	font-weight: normal;
	text-align: left;
	overflow: hidden;
}

th {
	height: 28px;
	padding-bottom: 2px;
	border-right: 1px solid #e0e0e0;
	font-size: 13px;
}

th.end {
	padding-right: 0;
	border-right: 0;
}

.num {
	text-align: right;
}

td.num {
	padding-right: 7px;
}

.sorted {
	position: relative;
}

.sorted svg {
	position: absolute;
	top: 0;
	left: 50%;
	width: 10px;
	height: 6px;
}

.l-name {
	width: 375px;
}

.l-size {
	width: 158px;
}

.r-name {
	width: 209px;
}

.r-size {
	width: 84px;
}

.r-type {
	width: 90px;
}

.r-date {
	width: 113px;
}

.r-perm {
	width: 90px;
}

.name {
	display: flex;
	align-items: center;
	height: 21px;
	margin-right: -6px;
	font-size: 13px;
}

.name span {
	flex: 1;
	margin-left: 1px;
	padding-left: 2px;
	line-height: 21px;
}

.marked td:not(:first-child),
.marked .name span {
	background: #f0f0f0;
}

.selected td:not(:first-child),
.selected .name span {
	background: #0078d7;
	color: #fff;
}

.hscroll {
	margin-top: auto;
}

.summary {
	height: 26px;
	padding: 0 2px;
	border-top: 1px solid #ddd;
	background: #f0f0f0;
	line-height: 28px;
}

.queue {
	height: 117px;
	margin-top: 7px;
	border: 2px solid #828790;
	border-width: 1px 2px 2px 1px;
	background: #fff;
}

.queue th {
	height: 29px;
}

.queue td:first-child,
.queue th:first-child {
	padding-left: 8px;
}

.q-file {
	width: 592px;
}

.q-dir {
	width: 67px;
}

.q-remote {
	width: 203px;
}

.q-size {
	width: 90px;
}

.q-prio {
	width: 67px;
}

.q-status {
	width: 169px;
}

.child span {
	padding-left: 9px;
}

.queue .dir {
	padding-left: 20px;
}

.path {
	font-size: 13px;
}

.progress {
	display: flex;
	align-items: center;
	padding-left: 56px;
}

.elapsed {
	width: 124px;
}

.left {
	width: 93px;
}

.bar {
	position: relative;
	width: 115px;
	height: 19px;
	margin-right: 22px;
	border: 1px solid #999;
	background: #f0f0f0;
	text-align: center;
}

.bar i {
	position: absolute;
	top: 0;
	left: 0;
	height: 100%;
	background: linear-gradient(90deg, #0a9a0a, #00c800 50%, #0a9a0a);
}

.bar b {
	font-weight: normal;
}

.tabs {
	display: flex;
	height: 30px;
	padding-left: 6px;
	border-top: 2px solid #fff;
	border-bottom: 1px solid #d8d8d8;
	background: linear-gradient(#c4c4c4, #f0f0f0);
}

.tabs button {
	width: 113px;
	height: 24px;
	padding: 0 8px;
	border: 1px solid #aaa;
	border-top: 0;
	border-bottom-width: 2px;
	border-radius: 0 0 4px 4px;
	background: linear-gradient(#e8e8e8, #d9d9d9);
	text-align: left;
}

.tabs button:last-child {
	width: 164px;
}

.tabs .active {
	width: 117px;
	background: #fff;
	font-size: 13px;
	font-weight: bold;
}

.fz-status {
	display: flex;
	align-items: center;
	gap: 4px;
	height: 25px;
	padding-top: 1px;
}

.lock {
	margin-left: auto;
}

.fz-total {
	width: 138px;
	padding-left: 7px;
}

.leds {
	display: flex;
	align-items: center;
	gap: 5px;
	height: 24px;
	width: 49px;
	padding-left: 10px;
	border-left: 1px solid #d7d7d7;
}

.grip {
	align-self: flex-end;
	margin: 0 2px 2px 0;
}

.cursor {
	position: absolute;
	left: 725px;
	top: 519px;
	width: 14px;
	height: 22px;
}

/* taskbar */
.taskbar {
	display: flex;
	height: 45px;
	background: #101010;
	color: #fff;
}

.taskbar button {
	display: flex;
	align-items: center;
	justify-content: center;
	width: 55px;
	background: linear-gradient(#76b9ed, #76b9ed) center bottom / 0 2px no-repeat;
}

.taskbar button svg {
	width: 26px;
	height: 26px;
}

.taskbar .running {
	background-size: 45px 2px;
}

.taskbar .front {
	background-color: #333;
	background-size: 100% 2px;
}

.tray {
	display: flex;
	align-items: center;
	gap: 9px;
	margin-left: auto;
	padding-right: 23px;
}

.clock {
	display: flex;
	flex-direction: column;
	width: 62px;
	margin-right: 8px;
	line-height: 20px;
	text-align: center;
}

.peek {
	width: 5px;
	border-left: 1px solid #555;
}

/* noVNC control bar */
.novnc {
	position: absolute;
	left: 0;
	top: 50%;
	transform: translateY(-50%);
	display: flex;
}

.novnc-panel {
	display: flex;
	flex-direction: column;
	align-items: center;
	gap: 10px;
	width: 55px;
	padding: 8px 10px 10px;
	border-radius: 0 10px 10px 0;
	background: #494949;
	box-shadow: 6px 6px 0 rgba(0, 0, 0, 0.4);
	z-index: 1;
}

.novnc h1 {
	display: flex;
	flex-direction: column;
	font: bold 14px "DejaVu Sans", sans-serif;
	line-height: 13px;
	color: #e0e000;
	text-shadow: 1px 1px 0 #000;
}

.novnc h1 span {
	font-size: 13px;
	color: #008000;
}

.novnc hr {
	width: 35px;
	border: 0;
	border-top: 1px solid #6a6a6a;
}

.novnc-panel button {
	display: flex;
	align-items: center;
	justify-content: center;
	width: 35px;
	height: 35px;
	border: 1px solid #6a6a6a;
	border-radius: 5px;
}

.novnc-panel button svg {
	width: 20px;
	height: 20px;
}

.novnc-panel .pressed {
	border-color: #111;
	background: #262626;
}

.handle {
	display: flex;
	align-items: center;
	justify-content: center;
	width: 15px;
	height: 50px;
	margin-top: 35px;
	border-radius: 0 5px 5px 0;
	background: #494949;
	box-shadow: 3px 3px 0 rgba(0, 0, 0, 0.4);
}

.handle svg {
	width: 5px;
	height: 8px;
}
```
